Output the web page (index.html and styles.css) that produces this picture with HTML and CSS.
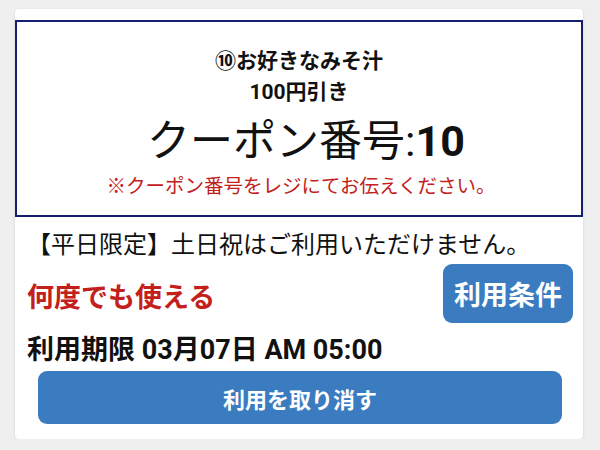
FILE: index.html
```html
<!DOCTYPE html>
<html lang="ja">
<head>
<meta charset="utf-8">
<link rel="stylesheet" href="styles.css">
</head>
<body>
<div class="card">
  <div class="coupon">
    <div class="title">⑩お好きなみそ汁</div>
    <div class="title">100円引き</div>
    <div class="number">クーポン番号:<b>10</b></div>
    <div class="note">※クーポン番号をレジにてお伝えください。</div>
  </div>
  <div class="info">
    <div class="limit">【平日限定】土日祝はご利用いただけません。</div>
    <div class="row">
      <div class="reuse">何度でも使える</div>
      <button class="terms">利用条件</button>
    </div>
    <div class="expire">利用期限 03月07日 AM 05:00</div>
    <button class="cancel">利用を取り消す</button>
  </div>
</div>
</body>
</html>
```
FILE: styles.css
```css
html, body {
  margin: 0;
  padding: 0;
  background: #efefef;
  font-family: Roboto, "Noto Sans CJK JP", sans-serif;
  color: #111;
}
.card {
  width: 568px;
  margin: 9px 0 0 15px;
  background: #fff;
  border-radius: 4px;
  box-shadow: 0 1px 3px rgba(0,0,0,0.12);
  padding-top: 11px;
  padding-bottom: 15px;
}
.coupon {
  border: 2px solid #14206e;
  padding: 23px 0 14px;
  text-align: center;
}
.title {
  font-size: 21px;
  font-weight: 700;
  line-height: 32px;
}
.title + .title {
  margin-top: -1px;
}
.number {
  font-size: 43px;
  line-height: 64px;
  font-weight: 400;
  padding-left: 14px;
  margin-top: 1px;
}
.number b {
  font-weight: 700;
}
.note {
  font-size: 19.5px;
  line-height: 28px;
  color: #c4201b;
  padding-left: 4px;
}
.info {
  padding: 11px 10px 0 12px;
}
.limit {
  font-size: 24px;
  line-height: 34px;
}
.row {
  display: flex;
  justify-content: space-between;
  align-items: center;
  margin-top: 2px;
}
.reuse {
  color: #c4201b;
  font-size: 27px;
  font-weight: 700;
  padding-top: 4px;
}
button {
  font-family: Roboto, "Noto Sans CJK JP", sans-serif;
  border: none;
  background: #3b7cc0;
  color: #fff;
  font-weight: 700;
  cursor: pointer;
}
.terms {
  width: 130px;
  height: 59px;
  border-radius: 9px;
  font-size: 27px;
  padding: 0;
}
.expire {
  font-size: 27px;
  font-weight: 700;
  line-height: 32px;
  margin-top: 11px;
}
.cancel {
  display: block;
  width: 524px;
  height: 53px;
  margin: 5px 0 0 11px;
  border-radius: 9px;
  font-size: 22px;
}
```
